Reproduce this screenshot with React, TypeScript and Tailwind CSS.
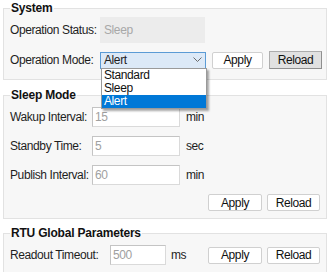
import React from "react";

function Btn({ label, gray, w }: { label: string; gray?: boolean; w: string }) {
  return (
    <button
      className={
        gray
          ? `${w} h-[18px] flex items-center justify-center bg-[#e1e1e1] border border-[#adadad] border-b-[#8f8f8f] border-r-[#8f8f8f] text-[#111] leading-none`
          : `${w} h-[17px] flex items-center justify-center bg-white border border-[#d0d0d0] rounded-[2px] text-[#111] leading-none`
      }
    >
      {label}
    </button>
  );
}

function Field({ value, w }: { value: string; w: string }) {
  return (
    <div
      className={`${w} h-[20px] bg-white border border-[#dadada] border-t-[#c4c4c4] border-l-[#c4c4c4] flex items-center pl-[2px] text-[#a0a0a0]`}
    >
      {value}
    </div>
  );
}

export default function App() {
  return (
    <div className="relative w-[330px] h-[272px] overflow-hidden bg-white px-[3px] font-['Liberation_Sans',Arial,sans-serif] text-[12px] tracking-[-0.4px] whitespace-nowrap text-[#1e1e1e]">
      {/* System */}
      <fieldset className="border border-[#e2e2e2] bg-[#f7f7f7] pl-[6px] pr-[4px] pb-[10px]">
        <legend className="px-[1px] h-[16px] leading-[16px] font-bold text-[#111] tracking-[-0.2px]">System</legend>
        <div className="flex items-center h-[26px] mt-[1px]">
          <div className="w-[90px]">Operation Status:</div>
          <div className="w-[105px] h-[26px] bg-[#ececec] flex items-center pl-[4px] text-[#a8a8a8]">Sleep</div>
        </div>
        <div className="flex items-center h-[18px] mt-[8px]">
          <div className="w-[90px]">Operation Mode:</div>
          <div className="w-[106px] h-[17px] border border-[#5b9bd5] bg-[#dce9f7] flex items-center pl-[3px] relative">
            <span>Alert</span>
            <svg className="absolute right-[3px] top-[4px]" width="9" height="6" viewBox="0 0 9 6">
              <path d="M0.5 0.5 L4.5 4.5 L8.5 0.5" fill="none" stroke="#6a6a6a" strokeWidth="1" />
            </svg>
          </div>
          <div className="ml-[6px]">
            <Btn label="Apply" w="w-[51px]" />
          </div>
          <div className="ml-[6px]">
            <Btn label="Reload" gray w="w-[53px]" />
          </div>
        </div>
      </fieldset>

      {/* Sleep Mode */}
      <fieldset className="mt-[7px] border border-[#e2e2e2] bg-[#f7f7f7] pl-[6px] pr-[6px] pb-[7px]">
        <legend className="px-[1px] h-[16px] leading-[16px] font-bold text-[#111] tracking-[-0.2px]">Sleep Mode</legend>
        <div className="flex flex-col gap-[9px] pt-[4px]">
          <div className="flex items-center h-[20px]">
            <div className="w-[82px]">Wakup Interval:</div>
            <Field value="15" w="w-[88px]" />
            <div className="ml-[6px]">min</div>
          </div>
          <div className="flex items-center h-[20px]">
            <div className="w-[82px]">Standby Time:</div>
            <Field value="5" w="w-[88px]" />
            <div className="ml-[6px]">sec</div>
          </div>
          <div className="flex items-center h-[20px]">
            <div className="w-[82px]">Publish Interval:</div>
            <Field value="60" w="w-[88px]" />
            <div className="ml-[6px]">min</div>
          </div>
        </div>
        <div className="flex justify-end gap-[5px] mt-[9px]">
          <Btn label="Apply" w="w-[54px]" />
          <Btn label="Reload" w="w-[53px]" />
        </div>
      </fieldset>

      {/* RTU */}
      <fieldset className="mt-[6px] border border-[#e2e2e2] bg-[#f7f7f7] pl-[6px] pr-[6px] pb-[10px]">
        <legend className="px-[1px] h-[16px] leading-[16px] font-bold text-[#111] tracking-[-0.2px]">RTU Global Parameters</legend>
        <div className="flex items-center h-[20px] mt-[4px]">
          <div className="w-[100px]">Readout Timeout:</div>
          <Field value="500" w="w-[56px]" />
          <div className="ml-[5px] w-[37px]">ms</div>
          <div className="flex gap-[5px] ml-auto">
            <Btn label="Apply" w="w-[54px]" />
            <Btn label="Reload" w="w-[53px]" />
          </div>
        </div>
      </fieldset>

      {/* Open dropdown list */}
      <div className="absolute left-[101px] top-[68px] w-[106px] bg-white border border-[#9a9a9a] shadow-[2px_2px_2px_rgba(0,0,0,0.35)] text-[#111]">
        <div className="h-[13px] leading-[13px] pl-[2px]">Standard</div>
        <div className="h-[13px] leading-[13px] pl-[2px]">Sleep</div>
        <div className="h-[13px] leading-[13px] pl-[2px] bg-[#0078d7] text-white">Alert</div>
      </div>
    </div>
  );
}
